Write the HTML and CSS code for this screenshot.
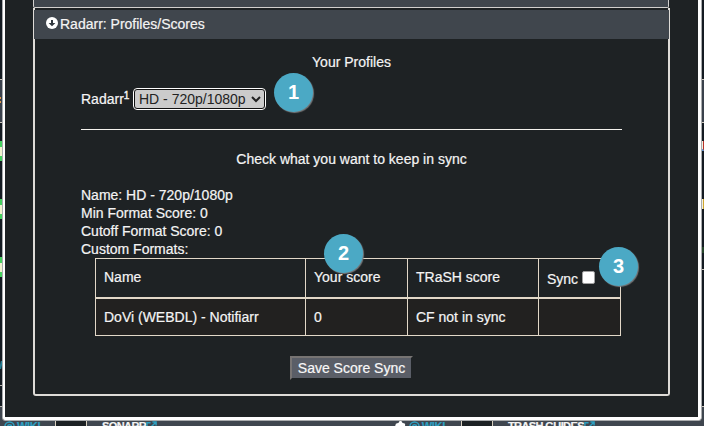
FILE: index.html
```html
<!DOCTYPE html>
<html lang="en">
<head>
<meta charset="utf-8">
<title>Radarr: Profiles/Scores</title>
<link rel="stylesheet" href="styles.css">
</head>
<body>
<div class="backdrop">
  <div class="edges">
    <div class="edge left">
      <div class="card-head"><i></i></div>
      <b class="chip"></b><b class="chip"></b><b class="chip"></b>
      <i class="link"></i>
      <div class="rule"></div>
      <div class="card-foot"></div>
    </div>
    <div class="edge right">
      <div class="card-head"></div>
      <b class="mark red"></b><b class="mark gold"></b><b class="mark green"></b>
      <div class="rule"></div>
      <div class="card-foot"></div>
    </div>
  </div>
  <div class="cards">
    <div class="card first"><svg class="wiki" viewBox="0 0 12 12"><circle cx="6" cy="6" r="5"/><circle cx="6" cy="6" r="2"/><path d="M8 4v3q1 2 2-1"/></svg><span class="wiki-text">WIKI</span></div>
    <div class="gap"></div>
    <div class="card second"><span class="name">SONARR</span><svg class="ext" viewBox="0 0 12 12"><path d="M5 2H1v9h8V7M4 8l7-7M7 1h4v4"/></svg>
      <span class="right-links"><svg class="gear" viewBox="0 0 12 12"><path d="M4 2l1-2h2l1 2 3 1v3l-1 5H2L0 6l1-3z"/><circle cx="6" cy="6" r="2"/></svg><svg class="wiki" viewBox="0 0 12 12"><circle cx="6" cy="6" r="5"/><circle cx="6" cy="6" r="2"/><path d="M8 4v3q1 2 2-1"/></svg><span class="wiki-text">WIKI</span></span></div>
    <div class="gap"></div>
    <div class="card third"><span class="name">TRASH GUIDES</span><svg class="ext" viewBox="0 0 12 12"><path d="M5 2H1v9h8V7M4 8l7-7M7 1h4v4"/></svg></div>
  </div>
</div>
<main class="modal">
  <div class="previous"></div>
  <section class="panel">
    <header><svg viewBox="0 0 12 12"><circle cx="6" cy="6" r="6" fill="#fff"/><path d="M5 3h2v3h2.4L6 9.3 2.6 6H5z" fill="#30373e"/></svg><span>Radarr: Profiles/Scores</span></header>
    <div class="content">
      <h2>Your Profiles</h2>
      <div class="picker"><label for="profile">Radarr<sup>1</sup></label>
        <select id="profile"><option>HD - 720p/1080p</option></select></div>
      <hr>
      <p class="hint">Check what you want to keep in sync</p>
      <div class="details">
        <div>Name: HD - 720p/1080p</div>
        <div>Min Format Score: 0</div>
        <div>Cutoff Format Score: 0</div>
        <div>Custom Formats:</div>
      </div>
      <div class="table">
        <div class="row head"><div>Name</div><div>Your score</div><div>TRaSH score</div><div class="sync">Sync <input type="checkbox" aria-label="Sync"></div></div>
        <div class="row"><div>DoVi (WEBDL) - Notifiarr</div><div>0</div><div>CF not in sync</div><div></div></div>
      </div>
      <button type="button">Save Score Sync</button>
    </div>
  </section>
</main>
<span class="badge one">1</span>
<span class="badge two">2</span>
<span class="badge three">3</span>
</body>
</html>
```
FILE: styles.css
```css
* { box-sizing: border-box; }
body {
  margin: 0;
  width: 704px;
  height: 426px;
  overflow: hidden;
  position: relative;
  background: #141b22;
  color: #f4f4f4;
  font: 14px/18px "Liberation Sans", Arial, sans-serif;
  -webkit-text-stroke: 0.2px;
}
span { white-space: nowrap; }

/* page behind the dialog */
.backdrop { height: 426px; overflow: hidden; }
.edges { display: flex; justify-content: space-between; height: 420px; }
.edge { display: flex; flex-direction: column; width: 3px; }
.edge.right { width: 2px; }
.card-head { height: 44px; margin-top: 79px; background: #3a414c; border: solid #cfc9bf; border-width: 1px 0; flex: none; }
.card-head i { display: block; width: 1px; height: 6px; margin-top: 17px; border: solid #e69a45; border-width: 2px 0; }
.chip { height: 20px; margin-bottom: 38px; border: solid #46d160; border-width: 6px 0 5px; background: #f1f3cf; flex: none; }
.card-head + .chip { margin-top: 18px; }
.link { width: 2px; height: 8px; margin-top: 46px; background: #217b91; transform: skewX(-12deg); }
.left .rule { height: 22px; margin-top: 16px; border: solid #b7b3ac; border-width: 1px 0; }
.card-foot { flex: 1; background: #3f464f; }
.mark { height: 10px; flex: none; background: #f0eee0; border-right: 1px solid; }
.red { margin-top: 18px; border-color: #b83228; border-bottom: 2px solid #5d9bda; }
.gold { margin-top: 48px; border-color: #d0a62e; }
.green { height: 6px; margin-top: 38px; background: #25452a; border: 0; }
.right .rule { height: 138px; margin-top: 16px; border: solid #cfc9bf; border-width: 1px 0; }
.cards { display: flex; height: 6px; overflow: hidden; font: bold 11px/11px "Liberation Sans", Arial, sans-serif; }
.card { display: flex; align-items: flex-start; height: 20px; background: #3f464f; padding-top: 1px; }
.first { width: 55px; padding-left: 4px; }
.gap { width: 32px; background: #1c2124; border: solid #d8d0c0; border-width: 0 1px; height: 20px; }
.second { width: 374px; padding-left: 15px; }
.third { flex: 1; padding-left: 15px; }
.card svg { width: 11px; height: 11px; flex: none; }
.wiki, .ext { fill: none; stroke: #2d9fc0; stroke-width: 1.6; }
.wiki-text { color: #2d9fc0; margin-left: 2px; letter-spacing: -0.3px; }
.name { letter-spacing: -0.6px; }
.right-links { display: flex; margin-left: auto; margin-right: 16px; }
.gear { fill: #fff; margin-right: 3px; }

/* dialog */
.modal {
  position: absolute;
  top: -4px;
  left: 2px;
  width: 700px;
  height: 425px;
  padding: 4px 28px 0;
  border: 1px solid #aaacae;
  border-radius: 3px;
  background: #1e2224;
  box-shadow: inset 2px 0 #fff, inset -3px 0 #fff, inset 0 -3px #fff;
}
.previous { height: 8px; margin: -1px 2px 0; width: 636px; background: #40464d; border: solid #d2d0ce; border-width: 0 1px 1px; border-radius: 0 0 2px 2px; }
.panel { width: 637px; height: 388px; margin: 0 2px; padding-top: 2px; border: 2px solid #dedbd7; border-top: 0; border-radius: 0 0 3px 3px; }
.panel header { display: flex; align-items: center; height: 29px; margin: 0 -1px; padding-left: 12px; background: #40464d; }
header svg { width: 12px; height: 12px; margin: -4px 2px 0 0; }
header span { margin-top: -2px; }
.content { display: flex; flex-direction: column; width: 541px; margin-left: 46px; }
h2 { margin: 14px 0 0; font: inherit; text-align: center; }
.picker { display: flex; align-items: center; height: 22px; margin-top: 17px; }
.picker label { width: 52px; white-space: nowrap; }
sup { font-size: 10px; line-height: 0; vertical-align: 5px; -webkit-text-stroke: 0.4px; }
select {
  width: 133px;
  height: 22px;
  padding: 0;
  border: 2px solid #101010;
  border-radius: 4px;
  outline: 1px solid #fff;
  outline-offset: -1px;
  background: #cbcbcb;
  color: #222;
  font: 14px "Liberation Sans", Arial, sans-serif;
  -webkit-text-stroke: 0;
}
hr { width: 541px; height: 1px; margin: 19px 0 0; border: 0; background: #f4f2ee; }
.hint { margin: 20px 0 0; text-align: center; }
.details { margin-top: 18px; }
.table { width: 526px; margin: 0 0 0 14px; border: 1px solid #e2d8c8; }
.row { display: grid; grid-template-columns: 210px 102px 131px 81px; height: 36px; background: #222120; }
.row.head { height: 40px; background: #1e2224; border-bottom: 2px solid #e2d8c8; }
.row > div { display: flex; align-items: center; padding-left: 8px; border-right: 1px solid #e2d8c8; white-space: nowrap; }
.row > div:last-child { border: 0; }
.row.head > div { padding-bottom: 2px; }
.row.head > .sync { padding: 2px 0 0 8px; }
.sync input { appearance: none; width: 13px; height: 13px; margin: -4px 0 0 4px; border: 1px solid #a0a0a0; border-radius: 2px; background: #fff; }
button {
  width: 123px;
  height: 24px;
  margin: 20px 0 0 209px;
  padding: 0;
  border: 2px solid;
  border-color: #777473 #1e2224 #1e2224 #777473;
  background: #5a5e67;
  color: #f7f7f7;
  font: inherit;
  -webkit-text-stroke: inherit;
  white-space: nowrap;
}

/* numbered callouts */
.badge {
  position: absolute;
  width: 39px;
  height: 39px;
  border-radius: 50%;
  background: #4ba9c5;
  color: #fff;
  box-shadow: 1px 1px 1px #77797b;
  font: bold 20px/38px "Liberation Sans", Arial, sans-serif;
  -webkit-text-stroke: 0;
  text-align: center;
}
.one { left: 274px; top: 73px; }
.two { left: 324px; top: 234px; }
.three { left: 599px; top: 247px; }
```
